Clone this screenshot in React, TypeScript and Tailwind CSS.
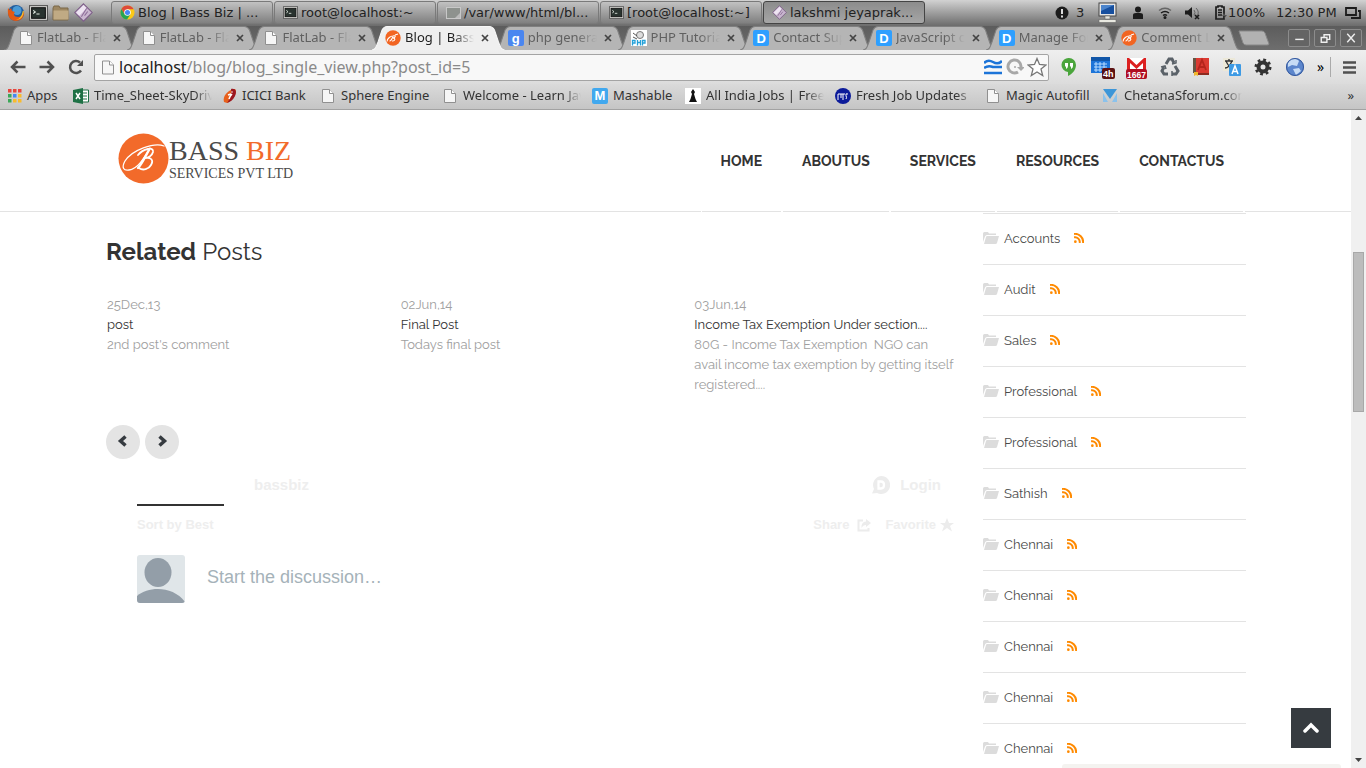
import React from "react";

type P = { className?: string };

const chrome = "font-['Noto_Sans','Open_Sans',sans-serif]";

const PageIcon = ({ className = "mr-[2px] w-3 h-[14px]" }: P) => (
  <svg viewBox="0 0 12 14" className={`${className} shrink-0`} fill="#f6f6f6" stroke="#909090">
    <path d="M.5.5h7l4 4v9H.5z" />
    <path d="M7.5.5v4h4" fill="#fff" />
  </svg>
);

const BassIcon = () => (
  <svg viewBox="0 0 16 16" className="size-4 shrink-0">
    <circle cx="8" cy="8" r="7.7" fill="#f26522" />
    <path d="M2 11.5C2 8 6 6 8 6M8 6.500C7 9 6 11 4.500 11M8 6c3-1 3 1.500 0 2 3 0 2 3.500-1 3M10 5l3-1" fill="none" stroke="#fff" strokeWidth="1.100" />
  </svg>
);

const TileIcon = ({ letter, className }: { letter: string; className: string }) => (
  <span className={`flex size-4 shrink-0 items-center justify-center rounded-[2px] font-['Liberation_Sans',sans-serif] text-[13px] font-bold leading-none text-white ${className}`}>
    {letter}
  </span>
);

const PhpIcon = () => (
  <svg viewBox="0 0 16 16" className="size-4 shrink-0">
    <rect width="16" height="16" fill="#fff" />
    <circle cx="9" cy="5" r="3.500" fill="#ddd" stroke="#777" />
    <path d="M2 3l4 3M2 7l4 2" stroke="#555" />
    <path d="M1.500 15.500v-5h2.500v2.500H2M6.500 10v5.500M9.500 10v5.500M6.500 12.500h3M11.500 15.500v-5H14v2.500h-2" stroke="#24a0d8" fill="none" strokeWidth="1.300" />
  </svg>
);

const TerminalIcon = ({ className = "w-[18px] h-[15px]" }: P) => (
  <svg viewBox="0 0 18 15" className={`${className} shrink-0`}>
    <rect x=".5" y=".5" width="17" height="14" fill="#d6d6d2" stroke="#555" />
    <rect x="2.500" y="2.500" width="13" height="10" fill="#29332f" stroke="#111" />
    <path d="M4 5l2 1.500L4 8M7 8.500h3" stroke="#e8efe8" fill="none" />
  </svg>
);

const PidginIcon = ({ className = "size-4" }: P) => (
  <svg viewBox="0 0 18 18" className={`${className} shrink-0`}>
    <path d="M9 .8L17.200 9 9 17.200.8 9z" fill="#c9b6cf" stroke="#7b5b86" />
    <path d="M9 2l3 3-7 7-3-3z" fill="#eee4f2" />
    <path d="M7 13l5-8M10 12l3-4" stroke="#8d6c99" />
  </svg>
);

const FirefoxIcon = () => (
  <svg viewBox="0 0 18 18" className="size-[18px] shrink-0">
    <circle cx="9" cy="9" r="8" fill="#225c9c" />
    <circle cx="10" cy="6.500" r="4.500" fill="#4a9bd6" />
    <path d="M1 4c-1 8 2 13 8 13 5 0 9-4 8-10-1 4-3 6-6 6-4 0-5-3-3-5L5 7 4 4 2.500 6z" fill="#e25a14" />
    <path d="M16.800 7c0 5-3 9-8 9 4-1 6-4 7-9z" fill="#f9c02c" />
  </svg>
);

const ChromeIcon = () => (
  <svg viewBox="0 0 16 16" className="size-[15px] shrink-0">
    <circle cx="8" cy="8" r="7.500" fill="#fbc916" />
    <path d="M1.500 4.200A7.500 7.500 0 0114.500 4.500H8L5 10z" fill="#dd4b39" />
    <path d="M1.500 4.200A7.500 7.500 0 007.500 15.500L11 10H5z" fill="#27a552" />
    <circle cx="8" cy="8" r="3.500" fill="#fff" />
    <circle cx="8" cy="8" r="2.700" fill="#4587f3" />
  </svg>
);

const Folder = () => (
  <svg viewBox="0 0 18 16" className="h-4 w-[18px] shrink-0">
    <path d="M1 3l1-2h5l1 2h8v12H1z" fill="#9d8762" stroke="#7b6848" />
    <path d="M1.500 5.500h15v9h-15z" fill="#c0aa84" />
  </svg>
);

const tasks = [
  { icon: <ChromeIcon />, label: "Blog | Bass Biz | ..." },
  { icon: <TerminalIcon className="h-[13px] w-[15px]" />, label: "root@localhost:~" },
  {
    icon: (
      <svg viewBox="0 0 15 12" className="h-3 w-[15px] shrink-0">
        <rect x=".5" y=".5" width="14" height="11" fill="#8e928e" stroke="#c8c8c8" />
        <path d="M9 11l5-5v5z" fill="#bbb" />
      </svg>
    ),
    label: "/var/www/html/bl...",
  },
  { icon: <TerminalIcon className="h-[13px] w-[15px]" />, label: "[root@localhost:~]" },
  { icon: <PidginIcon className="size-[15px]" />, label: "lakshmi jeyaprak...", active: true },
];

function DesktopPanel() {
  return (
    <div className="flex h-[26px] shrink-0 items-center bg-linear-to-b from-[#d2d2d2] to-[#6c6c6c] pb-px font-['DejaVu_Sans',sans-serif] text-[13px] text-[#222]">
      <div className="flex w-[111px] shrink-0 items-center gap-1 pl-[7px]">
        <FirefoxIcon />
        <TerminalIcon className="h-4 w-[19px]" />
        <Folder />
        <PidginIcon className="size-[19px]" />
      </div>
      <div className="flex gap-px">
        {tasks.map((t) => (
          <button
            key={t.label}
            className={`flex h-[23px] w-[162px] items-center gap-[3px] overflow-hidden rounded-[3px] border pl-2 whitespace-nowrap ${
              t.active
                ? "border-[#444] bg-linear-to-b from-[#8c8c8c] to-[#a6a6a6]"
                : "border-[#7a7a7a] bg-linear-to-b from-[#c2c2c2] to-[#808080]"
            }`}
          >
            {t.icon}
            {t.label}
          </button>
        ))}
      </div>
      <div className="ml-auto flex items-center pr-[5px] text-[#222]">
        <svg viewBox="0 0 14 14" className="size-[14px]">
          <circle cx="7" cy="7" r="6.500" fill="#1c1c1c" />
          <path d="M7 3v5M7 9.500v2" stroke="#ddd" strokeWidth="2" />
        </svg>
        <span className="ml-[7px] w-[22px]">3</span>
        <svg viewBox="0 0 20 22" className="h-[22px] w-5">
          <rect x="1" y="1" width="17" height="13" fill="#e6e6e6" stroke="#444" />
          <rect x="3" y="3" width="13" height="9" fill="#174f9e" />
          <path d="M3 3h13L3 9z" fill="#4b84cc" />
          <path d="M7 14h5v3H7zM1 17.500h17v3H1z" fill="#e8e8e0" stroke="#666" strokeWidth=".6" />
        </svg>
        <svg viewBox="0 0 12 13" className="ml-[14px] h-[13px] w-3" fill="#1c1c1c">
          <circle cx="6" cy="3.500" r="3" />
          <path d="M1 13V9q0-2 3-2h4q3 0 3 2v4z" />
        </svg>
        <svg viewBox="0 0 14 12" className="ml-[14px] h-3 w-[14px]" fill="none" stroke="#1c1c1c" strokeWidth="1.500">
          <path d="M1 3.500q6-4.500 12 0" stroke="#666" />
          <path d="M3 6q4-3 8 0M5 8.500q2-1.500 4 0" />
          <circle cx="7" cy="10.500" r=".8" />
        </svg>
        <svg viewBox="0 0 17 14" className="ml-[12px] h-[14px] w-[17px]">
          <path d="M1 4.500h3L8 1v11L4 8.500H1z" fill="#1c1c1c" />
          <path d="M10 4q2 2.500 0 5M12 2q4 4 1 8" stroke="#666" fill="none" />
          <path d="M11 9l4 4M15 9l-4 4" stroke="#1c1c1c" strokeWidth="1.600" />
        </svg>
        <svg viewBox="0 0 13 15" className="ml-[13px] h-[15px] w-[13px]">
          <path d="M4 1h4v1h2v12H2V2h2z" fill="none" stroke="#1c1c1c" strokeWidth="1.700" />
          <path d="M4 5h4M4 7.500h4M4 10h4" stroke="#1c1c1c" strokeWidth="1.500" />
          <path d="M10 8l-2 3h3l-1 3 3-4h-2z" fill="#555" />
        </svg>
        <span className="ml-px w-[48px]">100%</span>
        <span className="w-[69px] whitespace-nowrap">12:30 PM</span>
        <svg viewBox="0 0 16 12" className="h-3 w-4" fill="none" stroke="#1c1c1c" strokeWidth="1.800">
          <path d="M1 1h10v7H1zM13 4h2v7H6" />
        </svg>
      </div>
    </div>
  );
}

const tabs: { icon: React.ReactNode; label: string; active?: boolean }[] = [
  { icon: <PageIcon className="mr-px ml-[3px] w-3 h-[14px]" />, label: "FlatLab - Fla" },
  { icon: <PageIcon className="mr-px ml-[3px] w-3 h-[14px]" />, label: "FlatLab - Fla" },
  { icon: <PageIcon className="mr-px ml-[3px] w-3 h-[14px]" />, label: "FlatLab - Fla" },
  { icon: <BassIcon />, label: "Blog | Bass", active: true },
  { icon: <TileIcon letter="g" className="bg-[#4a86f0]" />, label: "php genera" },
  { icon: <PhpIcon />, label: "PHP Tutoria" },
  { icon: <TileIcon letter="D" className="bg-[#2e9fff]" />, label: "Contact Sup" },
  { icon: <TileIcon letter="D" className="bg-[#2e9fff]" />, label: "JavaScript c" },
  { icon: <TileIcon letter="D" className="bg-[#2e9fff]" />, label: "Manage For" },
  { icon: <BassIcon />, label: "Comment Li" },
];

function TabStrip() {
  return (
    <div className={`flex h-6 shrink-0 items-end bg-linear-to-b from-[#5c5c5c] to-[#6e6e6e] px-1 ${chrome}`}>
      <div className="flex min-w-0 flex-1">
        {tabs.map((t, i) => (
          <div key={i} className={`relative flex h-6 min-w-0 flex-1 items-center pl-[13px] text-[13px] ${t.active ? "z-10 text-[#222]" : "z-0 text-[#606060]"}`}>
            <svg viewBox="0 0 132 24" preserveAspectRatio="none" className="absolute top-0 left-0 -z-10 h-6 w-[108%]">
              <path
                d="M0 24C4 23 4 21 6 16L10 4Q12 .5 15 .5H117Q120 .5 122 4L126 16C128 21 128 23 132 24"
                fill={t.active ? "#efefef" : "#b5b5b5"}
                stroke={t.active ? "#f8f8f8" : "#808080"}
              />
            </svg>
            {t.icon}
            <span className="ml-1 w-[69px] overflow-hidden mask-r-from-70% whitespace-nowrap">{t.label}</span>
            <button aria-label="Close tab" className="ml-[7px]">
              <svg viewBox="0 0 8 8" className="size-2" stroke="#444" strokeWidth="1.700">
                <path d="M1 1l6 6M7 1L1 7" />
              </svg>
            </button>
          </div>
        ))}
      </div>
      <button aria-label="New tab" className="mr-[18px] ml-[7px] self-center">
        <svg viewBox="0 0 32 16" className="h-4 w-8">
          <path d="M1 1h23q2 0 3 2l4 11q0 1-2 1H8q-2 0-3-2z" fill="#b2b2b2" stroke="#888" />
        </svg>
      </button>
      <div className="flex gap-1 self-center">
        {["M6 10h9", "M6 8h6v5H6zM9 8V5h6v5h-3", "M6 4l8 9M14 4l-8 9"].map((d) => (
          <button key={d} aria-label="Window control" className="h-[18px] w-[22px] rounded-[2px] border border-[#8c8c8c] bg-[#646464]">
            <svg viewBox="0 0 20 17" className="h-4 w-5" fill="none" stroke="#eee" strokeWidth="1.500">
              <path d={d} />
            </svg>
          </button>
        ))}
      </div>
    </div>
  );
}

const NavArrow = ({ flip }: { flip?: boolean }) => (
  <svg viewBox="0 0 16 14" className={`h-[14px] w-4 ${flip ? "rotate-180" : ""}`} fill="none" stroke="#505050" strokeWidth="2.500">
    <path d="M7.500 1.500L2 7l5.500 5.500M2 7h13.500" />
  </svg>
);

const extensions = [
  <svg key="h" viewBox="0 0 20 20" className="size-5">
    <path d="M10 1a7 7 0 00-1 14v4c4-2 8-6 8-11a7 7 0 00-7-7z" fill="#4aa53c" />
    <path d="M6 6h3v3q0 2-2 3V9.500H6zM11 6h3v3q0 2-2 3V9.500h-1z" fill="#fff" />
  </svg>,
  <svg key="c" viewBox="0 0 24 24" className="size-6">
    <rect x="0" y="2" width="19" height="16" fill="#1d74d8" />
    <path d="M0 2h19v4H0z" fill="#1257a8" />
    <path d="M3 9h13M3 12h13M3 15h13M5 7v10M9 7v10M13 7v10" stroke="#b8dcff" />
    <rect x="11" y="13" width="13" height="11" rx="2" fill="#5c1212" />
    <text x="12" y="22" fontSize="9" fontWeight="bold" fill="#fff" fontFamily="Liberation Sans">4h</text>
  </svg>,
  <svg key="g" viewBox="0 0 22 24" className="h-6 w-[22px]">
    <rect x="1" y="3" width="19" height="14" fill="#fff" />
    <path d="M1 17V3h2l7.500 7L18 3h2v14h-3V8l-6.500 6L4 8v9z" fill="#dc2020" />
    <rect x="0" y="14" width="21" height="10" rx="2" fill="#b00e22" />
    <text x="1" y="22.500" fontSize="8.500" fontWeight="bold" fill="#fff" fontFamily="Liberation Sans">1667</text>
  </svg>,
  <svg key="r" viewBox="0 0 20 20" className="size-5" fill="none" stroke="#5a6168" strokeWidth="3">
    <path d="M6 7l3-5h3l2 4M15 9l3 5-2 3h-4M8 17H4l-2-3 2-4" />
    <path d="M12 7l4-1V3M12 14v5M1 10l4-1 1 3" strokeWidth="1.500" />
  </svg>,
  <svg key="b" viewBox="0 0 18 20" className="h-5 w-[18px]">
    <path d="M1 1h16v15H1z" fill="#db3a31" />
    <path d="M1 1h3v15H1z" fill="#654" />
    <path d="M3 16h14v2H3z" fill="#8d2b20" />
    <path d="M6 13l4-10 4 10M7.500 10h5" stroke="#b5241c" strokeWidth="1.800" fill="none" />
    <path d="M2 15h4v4l-2-1-2 1z" fill="#f1b52c" />
  </svg>,
  <svg key="t" viewBox="0 0 20 20" className="size-5">
    <rect x="1" y="1" width="12" height="13" fill="#ece8d8" />
    <path d="M3 4h8M7 2v2M4 4q3 7 7 7M10 4q-3 7-7 7" stroke="#333" strokeWidth="1.300" fill="none" />
    <rect x="7" y="7" width="12" height="12" rx="1" fill="#3d9ae4" />
    <path d="M10 17l3-8 3 8M11 14.500h4" stroke="#fff" strokeWidth="1.500" fill="none" />
  </svg>,
  <svg key="s" viewBox="0 0 20 20" className="size-5">
    <circle cx="10" cy="10" r="4.500" fill="none" stroke="#333" strokeWidth="4" />
    <circle cx="10" cy="10" r="7.200" fill="none" stroke="#333" strokeWidth="2.600" strokeDasharray="2.800 2.850" />
  </svg>,
  <svg key="w" viewBox="0 0 20 20" className="size-5">
    <circle cx="10" cy="10" r="9" fill="#5c86cc" />
    <path d="M5 3q6-3 9 1l-2 5-5-1-4 2q-1-4 2-7zM8 12l6-1 2 3-5 4z" fill="#c7dcf5" />
    <circle cx="10" cy="10" r="8.500" fill="none" stroke="#34589c" />
  </svg>,
];

function Toolbar() {
  return (
    <div className={`flex h-[34px] shrink-0 items-center bg-linear-to-b from-[#efefef] to-[#dcdcdc] px-[10px] ${chrome}`}>
      <div className="flex w-[84px] shrink-0 items-center gap-[13px]">
        <button aria-label="Back"><NavArrow /></button>
        <button aria-label="Forward"><NavArrow flip /></button>
        <button aria-label="Reload">
          <svg viewBox="0 0 16 16" className="size-4" fill="none" stroke="#505050" strokeWidth="2.500">
            <path d="M13 11.500A6 6 0 1112 3.500" />
            <path d="M15 1v6H9z" fill="#505050" stroke="none" />
          </svg>
        </button>
      </div>
      <div className="flex h-[27px] min-w-0 flex-1 items-center rounded-[2px] border border-[#a4a4a4] bg-[#f8f8f8] pl-[7px] pr-px">
        <PageIcon className="h-[15px] w-3" />
        <label className="relative ml-[5px] min-w-0 flex-1 text-[16px] leading-6 text-[#222]">
          <input aria-label="Address" className="w-full bg-transparent text-[#8a8a8a] outline-none" defaultValue="localhost/blog/blog_single_view.php?post_id=5" />
          <span aria-hidden="true" className="pointer-events-none absolute top-0 left-0 bg-[#f8f8f8]">localhost</span>
        </label>
        <svg viewBox="0 0 18 16" className="h-4 w-[18px]" fill="none" stroke="#1c74d8" strokeWidth="2.600">
          <path d="M0 4q4-4 9-1t9-1M0 9q4-3 9-1h9M0 14h18" />
        </svg>
        <svg viewBox="0 0 18 18" className="ml-1 size-[18px]" fill="none" stroke="#a8a8a8" strokeWidth="3">
          <path d="M12 14A6.500 6.500 0 1115 9" />
          <path d="M11 9h8l-4 4z" fill="#a8a8a8" stroke="none" />
          <circle cx="9" cy="9" r="1" fill="#a8a8a8" stroke="none" />
        </svg>
        <svg viewBox="0 0 20 20" className="ml-[3px] size-5" fill="#fff" stroke="#777" strokeWidth="1.300">
          <path d="M10 1.500l2.500 6 6.500.5-5 4 1.700 6.500L10 15l-5.700 3.500L6 12 1 8l6.500-.5z" />
        </svg>
      </div>
      <div className="ml-[10px] flex w-[246px] shrink-0 items-center justify-between">
        {extensions.map((e, i) => (
          <button key={i} aria-label="Extension">{e}</button>
        ))}
      </div>
      <button className="ml-3 w-[14px] border-r border-[#aaa] text-left text-[14px] leading-5">»</button>
      <button aria-label="Menu" className="ml-3">
        <svg viewBox="0 0 13 13" className="size-[13px]" stroke="#505050" strokeWidth="2.600">
          <path d="M0 1.500h13M0 6.500h13M0 11.500h13" />
        </svg>
      </button>
    </div>
  );
}

const bookmarks: { w: string; icon: React.ReactNode; label: string; fade?: boolean }[] = [
  {
    w: "w-[65px]",
    icon: (
      <svg viewBox="0 0 14 14" className="size-[14px] shrink-0">
        {["#e8453c", "#e8453c", "#e8453c", "#3aa757", "#4587f3", "#f9bb2d", "#3aa757", "#f9bb2d", "#f9bb2d"].map((c, i) => (
          <rect key={i} x={(i % 3) * 5} y={Math.floor(i / 3) * 5} width="3.500" height="3.500" fill={c} />
        ))}
      </svg>
    ),
    label: "Apps",
  },
  {
    w: "w-[150px]",
    fade: true,
    icon: (
      <svg viewBox="0 0 16 16" className="size-4 shrink-0">
        <path d="M9 2h6.500v12H9z" fill="#fff" stroke="#1e7145" />
        <path d="M10 5h4M10 8h4M10 11h4" stroke="#1e7145" />
        <path d="M0 2l10-2v16L0 14z" fill="#1e7145" />
        <path d="M3 5l4 6M7 5l-4 6" stroke="#fff" strokeWidth="1.500" />
      </svg>
    ),
    label: "Time_Sheet-SkyDriv",
  },
  {
    w: "w-[99px]",
    icon: (
      <svg viewBox="0 0 14 16" className="h-4 w-[14px] shrink-0">
        <path d="M1 14C-1 8 6 1 12 1c3 3-2 12-8 14z" fill="#e8601c" />
        <path d="M8 1c5-1 6 3 4 7s-5 6-8 7c3-4 5-7 4-14z" fill="#9b1720" />
        <path d="M9 3.500v1M9 6q-2 2-3 5M5 7l3-1" stroke="#fff" strokeWidth="1.600" />
      </svg>
    ),
    label: "ICICI Bank",
  },
  { w: "w-[122px]", icon: <PageIcon />, label: "Sphere Engine" },
  { w: "w-[148px]", icon: <PageIcon />, label: "Welcome - Learn Jav", fade: true },
  { w: "w-[93px]", icon: <TileIcon letter="M" className="bg-[#41a8ee]" />, label: "Mashable" },
  {
    w: "w-[150px]",
    fade: true,
    icon: (
      <svg viewBox="0 0 16 16" className="size-4 shrink-0">
        <rect width="16" height="16" fill="#fff" />
        <path d="M8 1l2 3-1 2 1.500 5 1.500 3H4l1.500-3L7 6 6 4z" fill="#111" />
      </svg>
    ),
    label: "All India Jobs | Free",
  },
  {
    w: "w-[152px]",
    fade: true,
    icon: (
      <svg viewBox="0 0 16 16" className="size-4 shrink-0">
        <circle cx="8" cy="8" r="8" fill="#0c1b9a" />
        <path d="M3 12V6h3M6 10V6h4M8 6v6M13 6q-3-1-2 1.500T11 11" stroke="#fff" fill="none" />
      </svg>
    ),
    label: "Fresh Job Updates",
  },
  { w: "w-[116px]", icon: <PageIcon />, label: "Magic Autofill" },
  {
    w: "w-[153px]",
    fade: true,
    icon: (
      <svg viewBox="0 0 14 14" className="mr-[2px] size-[14px] shrink-0">
        <path d="M0 0h14L7 10z" fill="#3d96d8" />
        <path d="M0 4l5 9H0zM14 4l-5 9h5z" fill="#8bc2ec" />
      </svg>
    ),
    label: "ChetanaSforum.com",
  },
];

function Bookmarks() {
  return (
    <div className={`flex h-[26px] shrink-0 items-center border-b border-[#a2a2a2] bg-linear-to-b from-[#dadada] to-[#c5c5c5] pr-3 pb-[2px] pl-2 text-[13px] text-[#333] ${chrome}`}>
      {bookmarks.map((b) => (
        <a key={b.label} href="#" className={`flex shrink-0 items-center gap-[5px] ${b.w}`}>
          {b.icon}
          <span className={`whitespace-nowrap ${b.fade ? "w-[118px] overflow-hidden mask-r-from-85%" : ""}`}>{b.label}</span>
        </a>
      ))}
      <button className="ml-auto">»</button>
    </div>
  );
}

const Logo = () => (
  <a href="#" className="flex items-center pl-[12px]">
    <svg viewBox="0 0 51 51" className="size-[51px]">
      <circle cx="25.500" cy="25.500" r="25" fill="#f26a2a" />
      <g fill="none" stroke="#fff" strokeLinecap="round">
        <path d="M46 13C36 9 14 17 7 28c-4 7-1 10 4 9 9-1 15-12 21-22" strokeWidth="1.300" />
        <path d="M31 17C27 24 24 31 20 35" strokeWidth="2.400" />
        <path d="M20 22c5-6 16-9 15-3-1 4-5 6-8 6 6-1 9 2 6 7-2 4-8 6-12 3" strokeWidth="1.800" />
      </g>
    </svg>
    <span className="flex flex-col font-['Liberation_Serif',serif] text-[#4a4a4a]">
      <span className="text-[28px] leading-[30px]">
        BASS <span className="text-[#f26a2a]">BIZ</span>
      </span>
      <span className="text-[14px] leading-4">SERVICES PVT LTD</span>
    </span>
  </a>
);

function SiteHeader() {
  return (
    <header className="flex h-[102px] shrink-0 justify-between border-b border-[#e3e3e3] px-[106px] pb-1">
      <Logo />
      <nav className="-mb-[5px]">
        <ul className="flex h-full border-l border-white">
          {["HOME", "ABOUTUS", "SERVICES", "RESOURCES", "CONTACTUS"].map((n) => (
            <li key={n} className="flex items-center border-r-2 border-white px-[19px]">
              <a href="#" className="text-[14px] font-bold text-[#333]">{n}</a>
            </li>
          ))}
        </ul>
      </nav>
    </header>
  );
}

const posts = [
  { date: "25Dec,13", title: "post", body: ["2nd post's comment"] },
  { date: "02Jun,14", title: "Final Post", body: ["Todays final post"] },
  {
    date: "03Jun,14",
    title: "Income Tax Exemption Under section....",
    body: ["80G - Income Tax Exemption\u00a0 NGO can", "avail income tax exemption by getting itself", "registered...."],
  },
];

function Related() {
  return (
    <section className="pt-[22px]">
      <h2 className="text-[24px] leading-9 text-[#333]">
        <strong>Related</strong> Posts
      </h2>
      <div className="mt-[25px] grid h-[105px] grid-cols-3 gap-[33px] text-[13px] leading-5 text-[#a0a0a0]">
        {posts.map((p) => (
          <article key={p.date} className="overflow-hidden pl-px whitespace-nowrap">
            <p>{p.date}</p>
            <h3><a href="#" className="text-[#333]">{p.title}</a></h3>
            {p.body.map((l) => <p key={l}>{l}</p>)}
          </article>
        ))}
      </div>
      <div className="mt-[25px] flex gap-[5px]">
        {["M9.500 2.500L4.500 7l5 4.500", "M4.500 2.500l5 4.500-5 4.500"].map((d, i) => (
          <button key={d} aria-label={i ? "Next posts" : "Previous posts"} className="flex size-[34px] items-center justify-center rounded-full bg-[#e4e4e4] pb-[2px]">
            <svg viewBox="0 0 14 14" className="size-[14px]" fill="none" stroke="#363b40" strokeWidth="3.500">
              <path d={d} />
            </svg>
          </button>
        ))}
      </div>
    </section>
  );
}

function Discussion() {
  return (
    <section className="mt-3 pl-[31px] font-['Liberation_Sans',sans-serif]">
      <div className="flex h-7 items-center justify-between pr-[13px] pl-[117px] text-[15px] font-bold text-[#eee]">
        <span>bassbiz</span>
        <button className="flex items-center gap-[10px]">
          <svg viewBox="0 0 19 18" className="h-[18px] w-[19px]">
            <path d="M10 0a9 9 0 11-4 17l-5 .5 2-4.500A9 9 0 0110 0z" fill="#ececec" />
            <path d="M7.500 5.500h2.500q3 0 3 3.500t-3 3.500H7.500z" fill="none" stroke="#fff" strokeWidth="2.300" />
          </svg>
          Login
        </button>
      </div>
      <div className="mt-[5px] h-[2px] w-[87px] bg-[#333]" />
      <div className="mt-2 flex h-[22px] items-center justify-between text-[13px] font-bold text-[#eee]">
        <button>Sort by Best</button>
        <div className="flex gap-[14px]">
          <button className="flex items-center gap-2">
            Share
            <svg viewBox="0 0 14 13" className="h-[13px] w-[14px]">
              <path d="M6 1.500H1.500v10h10V9" fill="none" stroke="#ececec" strokeWidth="2" />
              <path d="M9 0l5 4-5 4V6Q6 6 4.500 9 4 3 9 2.500z" fill="#ececec" />
            </svg>
          </button>
          <button className="flex items-center gap-1">
            Favorite
            <svg viewBox="0 0 14 14" className="size-[14px]" fill="#ececec">
              <path d="M7 0l2 5h5l-4 3 2 5.500-5-3.500-5 3.500L4 8 0 5h5z" />
            </svg>
          </button>
        </div>
      </div>
      <div className="mt-[19px] flex items-center gap-[22px]">
        <svg viewBox="0 0 48 48" className="size-12 rounded-[3px]">
          <rect width="48" height="48" fill="#e0e6e9" />
          <ellipse cx="21" cy="17.500" rx="13.500" ry="14.500" fill="#939ea8" />
          <path d="M0 41C12 31 36 31 48 47v1H0z" fill="#939ea8" />
        </svg>
        <input aria-label="Comment" placeholder="Start the discussion…" className="min-w-0 flex-1 pb-1 text-[18px] outline-none placeholder:text-[#a5b2b9]" />
      </div>
    </section>
  );
}

const categories = ["Accounts", "Audit", "Sales", "Professional", "Professional", "Sathish", "Chennai", "Chennai", "Chennai", "Chennai", "Chennai"];

function Categories() {
  return (
    <aside className="w-[263px] shrink-0 pt-px">
      <ul className="border-t border-[#e3e3e3] text-[13px] text-[#4a4a4a]">
        {categories.map((c, i) => (
          <li key={i} className="flex h-[51px] items-center border-b border-[#e3e3e3]">
            <svg viewBox="0 0 16 12" className="mb-[2px] h-3 w-4" fill="#dcdcdc">
              <path d="M0 10V1.500Q0 0 1.500 0H5l1 1.500h7V3H4Q2.500 3 2 4.500z" />
              <path d="M4 4h12l-2 7q-.3 1-1.500 1H1L3 5q.3-1 1-1z" />
            </svg>
            <a href="#" className="ml-[5px]">{c}</a>
            <a href="#" aria-label={`${c} feed`} className="mb-[3px] ml-[14px]">
              <svg viewBox="0 0 11 11" className="size-[10px]" fill="none" stroke="#ff8a00" strokeWidth="2.200">
                <circle cx="1.500" cy="9.500" r="1.500" fill="#ff8a00" stroke="none" />
                <path d="M0 4.800A5.200 5.200 0 016.200 11M0 1a9 9 0 0110 10" />
              </svg>
            </a>
          </li>
        ))}
      </ul>
    </aside>
  );
}

function Scrollbar() {
  return (
    <div className="flex w-[15px] shrink-0 flex-col items-center justify-between bg-[#f0f0f0] py-[6px]">
      <svg viewBox="0 0 7 4" className="h-1 w-[7px]" fill="#444"><path d="M3.500 0L7 4H0z" /></svg>
      <div className="mt-[132px] mb-auto h-40 w-[11px] border border-[#a8a8a8] bg-[#bcbcbc]" />
      <svg viewBox="0 0 7 4" className="h-1 w-[7px]" fill="#444"><path d="M0 0h7L3.500 4z" /></svg>
    </div>
  );
}

export default function App() {
  return (
    <div className="flex h-screen flex-col overflow-hidden bg-white">
      <DesktopPanel />
      <TabStrip />
      <Toolbar />
      <Bookmarks />
      <div className="flex min-h-0 flex-1">
        <div className="relative flex min-w-0 flex-1 flex-col overflow-hidden font-['Raleway','Lato',sans-serif]">
          <SiteHeader />
          <div className="flex justify-between gap-[29px] pr-[105px] pl-[106px]">
            <main className="min-w-0 flex-1">
              <Related />
              <Discussion />
            </main>
            <Categories />
          </div>
          <button aria-label="Back to top" className="absolute right-5 bottom-5 flex size-10 items-center justify-center bg-[#363b40]">
            <svg viewBox="0 0 16 12" className="h-3 w-4" fill="none" stroke="#fff" strokeWidth="3.500" strokeLinecap="round">
              <path d="M2 9l6-6 6 6" />
            </svg>
          </button>
          <div className="absolute right-[10px] bottom-0 h-1 w-[279px] rounded-t-[3px] bg-[#f4f3f0]" />
        </div>
        <Scrollbar />
      </div>
    </div>
  );
}
